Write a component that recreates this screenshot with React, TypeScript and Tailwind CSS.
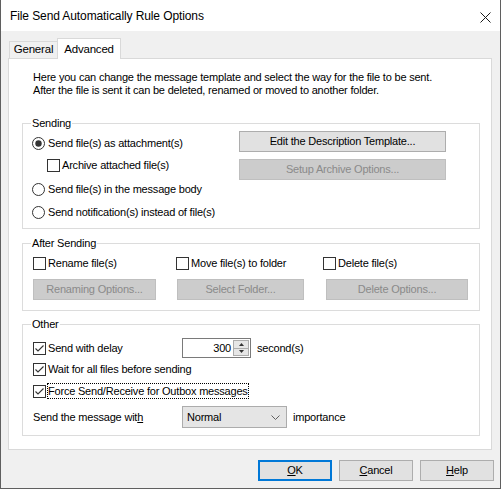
import type { ReactNode } from "react"

const sans = "font-['Liberation_Sans',Arial,sans-serif]"

function CheckBox({ checked = false }: { checked?: boolean }) {
    return (
        <span className="flex h-[13px] w-[13px] shrink-0 items-center justify-center border border-[#333333] bg-white">
            {checked && (
                <svg width="11" height="11" viewBox="0 0 11 11">
                    <path d="M1.5 5.5 L4 8 L9.5 2.5" fill="none" stroke="#333333" strokeWidth="1.1" />
                </svg>
            )}
        </span>
    )
}

function Check({ checked, label, focus }: { checked?: boolean; label: ReactNode; focus?: boolean }) {
    return (
        <div className="flex items-center">
            <CheckBox checked={checked} />
            {focus ? (
                <span className="ml-px flex h-[16px] items-center border border-dotted border-black px-0">{label}</span>
            ) : (
                <span className="ml-[2px]">{label}</span>
            )}
        </div>
    )
}

function Radio({ checked, label }: { checked?: boolean; label: string }) {
    return (
        <div className="flex items-center">
            <svg width="13" height="13" viewBox="0 0 13 13" className="shrink-0">
                <circle cx="6.5" cy="6.5" r="6" fill="white" stroke="#333333" strokeWidth="1" />
                {checked && <circle cx="6.5" cy="6.5" r="3.2" fill="#333333" />}
            </svg>
            <span className="ml-[3px]">{label}</span>
        </div>
    )
}

function Btn({ children, disabled, className = "" }: { children: ReactNode; disabled?: boolean; className?: string }) {
    return (
        <div
            className={
                "flex h-[21px] items-center justify-center border " +
                (disabled ? "border-[#bfbfbf] bg-[#cccccc] text-[#8a8a8a] " : "border-[#adadad] bg-[#e1e1e1] text-black ") +
                className
            }
        >
            {children}
        </div>
    )
}

function Group({ title, children, className = "" }: { title: string; children: ReactNode; className?: string }) {
    return (
        <fieldset className={"ml-[13px] w-[458px] border border-[#dcdcdc] pl-[9px] " + className}>
            <legend className="-ml-px px-px leading-[13px]">{title}</legend>
            {children}
        </fieldset>
    )
}

export default function App() {
    return (
        <div className={"flex h-[489px] w-[501px] flex-col border-b border-l border-r border-[#5f5f5f] bg-[#f0f0f0] text-[11px] tracking-[-0.2px] text-black " + sans}>
            {/* title bar */}
            <div className="flex h-[31px] shrink-0 items-center bg-white pl-[9px]">
                <span className="text-[12px] tracking-[-0.1px]">File Send Automatically Rule Options</span>
                <div className="ml-auto flex h-full w-[30px] items-center justify-center pt-[3px]">
                    <svg width="11" height="11" viewBox="0 0 11 11">
                        <path d="M0.5 0.5 L10.5 10.5 M10.5 0.5 L0.5 10.5" stroke="#1a1a1a" strokeWidth="1" />
                    </svg>
                </div>
            </div>

            {/* tabs */}
            <div className="flex items-end pl-[8px] pt-[7px]">
                <div className="flex h-[17px] w-[48px] items-center justify-center border-l border-t border-[#d9d9d9] text-[11.5px]">
                    General
                </div>
                <div className="relative z-10 -mb-px flex h-[21px] w-[64px] items-start justify-center border-l border-r border-t border-[#d9d9d9] bg-white pt-[2px] text-[11.5px]">
                    Advanced
                </div>
            </div>

            {/* panel */}
            <div className="ml-[7px] h-[392px] w-[484px] shrink-0 border border-[#d9d9d9] bg-white">
                <div className="pl-[24px] pt-[12px] leading-[13px]">
                    <div>Here you can change the message template and select the way for the file to be sent.</div>
                    <div>After the file is sent it can be deleted, renamed or moved to another folder.</div>
                </div>

                <Group title="Sending" className="mt-[20px]">
                    <div className="flex">
                        <div className="flex w-[207px] flex-col pb-[5px] pt-[2px]">
                            <div className="flex h-[22px] items-center">
                                <Radio checked label="Send file(s) as attachment(s)" />
                            </div>
                            <div className="flex h-[23px] items-center pl-[15px]">
                                <Check label="Archive attached file(s)" />
                            </div>
                            <div className="flex h-[24px] items-center">
                                <Radio label="Send file(s) in the message body" />
                            </div>
                            <div className="flex h-[22px] items-center">
                                <Radio label="Send notification(s) instead of file(s)" />
                            </div>
                        </div>
                        <div className="flex w-[207px] flex-col gap-[7px] pt-px">
                            <Btn>Edit the Description Template...</Btn>
                            <Btn disabled>Setup Archive Options...</Btn>
                        </div>
                    </div>
                </Group>

                <Group title="After Sending" className="mt-[8px]">
                    <div className="flex pb-[10px] pt-[4px]">
                        <div className="flex w-[144px] flex-col pl-px">
                            <div className="flex h-[19px] items-center">
                                <Check label="Rename file(s)" />
                            </div>
                            <Btn disabled className="mt-[6px] w-[123px]">Renaming Options...</Btn>
                        </div>
                        <div className="flex w-[147px] flex-col">
                            <div className="flex h-[19px] items-center">
                                <Check label="Move file(s) to folder" />
                            </div>
                            <Btn disabled className="ml-px mt-[6px] w-[127px]">Select Folder...</Btn>
                        </div>
                        <div className="flex w-[146px] flex-col">
                            <div className="flex h-[19px] items-center">
                                <Check label="Delete file(s)" />
                            </div>
                            <Btn disabled className="ml-[3px] mt-[6px] w-[142px]">Delete Options...</Btn>
                        </div>
                    </div>
                </Group>

                <Group title="Other" className="mt-[7px]">
                    <div className="flex flex-col pb-[7px] pl-px pt-[7px]">
                        <div className="flex h-[20px] items-center">
                            <div className="w-[149px]">
                                <Check checked label="Send with delay" />
                            </div>
                            <div className="flex h-[20px] w-[69px] items-center border border-[#7a7a7a] bg-white">
                                <span className="flex-1 pr-[2px] text-right">300</span>
                                <div className="mr-px flex h-[16px] w-[16px] flex-col border border-[#acacac] bg-[#e6e6e6]">
                                    <div className="flex flex-1 items-center justify-center border-b border-[#acacac]">
                                        <svg width="5" height="3" viewBox="0 0 5 3">
                                            <path d="M0 3 L2.5 0 L5 3 Z" fill="#333" />
                                        </svg>
                                    </div>
                                    <div className="flex flex-1 items-center justify-center">
                                        <svg width="5" height="3" viewBox="0 0 5 3">
                                            <path d="M0 0 L2.5 3 L5 0 Z" fill="#333" />
                                        </svg>
                                    </div>
                                </div>
                            </div>
                            <span className="ml-[6px]">second(s)</span>
                        </div>
                        <div className="flex h-[22px] items-center">
                            <Check checked label="Wait for all files before sending" />
                        </div>
                        <div className="flex h-[22px] items-center">
                            <Check checked focus label="Force Send/Receive for Outbox messages" />
                        </div>
                        <div className="mt-[4px] flex h-[22px] items-center">
                            <span className="w-[149px]">
                                Send the message wit<span className="underline">h</span>
                            </span>
                            <div className="flex h-[22px] w-[105px] items-center border border-[#acacac] bg-[#e5e5e5] pl-[4px] pr-[6px]">
                                <span className="flex-1">Normal</span>
                                <svg width="9" height="5" viewBox="0 0 9 5">
                                    <path d="M0.5 0.5 L4.5 4.5 L8.5 0.5" fill="none" stroke="#606060" strokeWidth="1" />
                                </svg>
                            </div>
                            <span className="ml-[6px]">importance</span>
                        </div>
                    </div>
                </Group>
            </div>

            {/* bottom buttons */}
            <div className="mt-[10px] flex gap-[7px] pl-[257px]">
                <div className="flex h-[21px] w-[74px] items-center justify-center border-2 border-[#0078d7] bg-[#e1e1e1]">
                    <span><span className="underline">O</span>K</span>
                </div>
                <Btn className="w-[74px]"><span><span className="underline">C</span>ancel</span></Btn>
                <Btn className="w-[74px]"><span><span className="underline">H</span>elp</span></Btn>
            </div>
        </div>
    )
}
